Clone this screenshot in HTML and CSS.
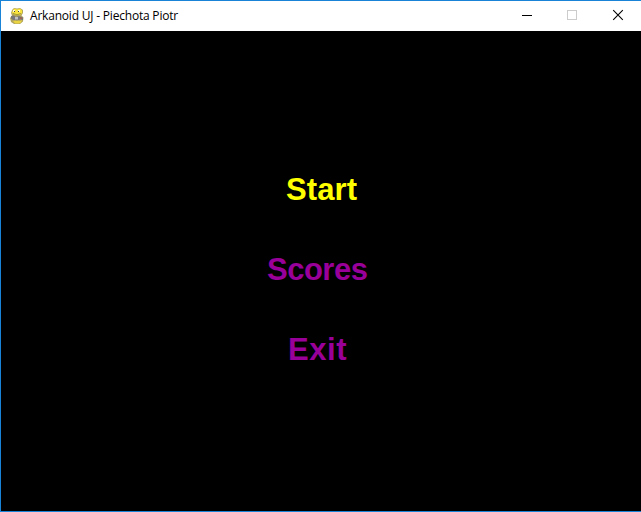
FILE: index.html
```html
<!DOCTYPE html>
<html lang="en">
<head>
<meta charset="utf-8">
<title>Arkanoid UJ - Piechota Piotr</title>
<link rel="stylesheet" href="styles.css">
</head>
<body>
<div class="window">
  <header class="titlebar">
    <svg class="app-icon" width="16" height="18" viewBox="0 0 16 18">
      <path d="M3 3L5 1L8 1.500L11 1L14 3V6L12.500 8.500L14.500 10.500L14 14.500L11 17H5L2 15L1 11L3 8.500L2 6Z" fill="#b3a65e"/>
      <path d="M4 3L5.500 1.500L8 2.500L11 1.500L13 3.500V6L11 8H6L3 6Z" fill="#f8e43c"/>
      <path d="M4 14L7 13L11 14L13 13L12 15.500L10 16.500H6Z" fill="#ead441"/>
      <path d="M2 9L5 8.500L7 10L10 9L14 10.500V13L11 12.500L8 13.500L4 13L2 11.500Z" fill="#77767a"/>
      <path d="M6 10H9V12.500H6Z" fill="#bfc0c5"/>
      <path d="M11 10.500H13V12H11Z" fill="#a9604e"/>
      <path d="M4 3H6V5H4ZM9 3H11V5H9Z" fill="#fffbd0"/>
      <path d="M5 4H6V5H5ZM9 4H10V5H9Z" fill="#504b38"/>
      <path d="M4 6.500Q8 9 12 6.500" fill="none" stroke="#8d8134" stroke-width=".8"/>
    </svg>
    <span class="title">Arkanoid UJ - Piechota Piotr</span>
    <div class="controls">
      <svg class="control" width="45" height="30" viewBox="0 0 45 30" shape-rendering="crispEdges"><path d="M17 14.500H27" stroke="#000"/></svg>
      <svg class="control" width="46" height="30" viewBox="0 0 46 30" shape-rendering="crispEdges"><path d="M17.500 9.500H26.500V18.500H17.500Z" fill="none" stroke="#ccc"/></svg>
      <svg class="control" width="45" height="30" viewBox="0 0 45 30"><path d="M17.200 9.200L26.800 18.800M26.800 9.200L17.200 18.800" stroke="#000" stroke-width="1.100"/></svg>
    </div>
  </header>
  <main class="menu">
    <div class="item start">Start</div>
    <div class="item scores">Scores</div>
    <div class="item exit">Exit</div>
  </main>
</div>
</body>
</html>
```

FILE: styles.css
```css
* { box-sizing: border-box; }
body { margin: 0; background: #000; }
.window {
  width: 641px;
  height: 512px;
  border: 1px solid #1883d7;
  border-right: 0;
  display: flex;
  flex-direction: column;
  overflow: hidden;
}
.titlebar {
  height: 30px;
  flex: none;
  display: flex;
  align-items: center;
  padding-left: 8px;
  background: #fff;
}
.app-icon { flex: none; }
.title {
  margin-left: 5px;
  font: 12px/16px "Open Sans", "Noto Sans", sans-serif;
  letter-spacing: -0.2px;
  color: #000;
  white-space: nowrap;
}
.controls { display: flex; margin-left: auto; }
.control { display: block; }
.menu {
  flex: 1;
  padding-top: 119px;
  background: #000;
  color: #990099;
  font: bold 31px/80px "Liberation Sans", Arial, sans-serif;
}
.item { height: 80px; white-space: nowrap; }
.start { padding-left: 285px; color: #ff0; letter-spacing: 0.1px; }
.scores { padding-left: 266px; letter-spacing: -0.5px; }
.exit { padding-left: 287px; letter-spacing: 0.6px; }
```
